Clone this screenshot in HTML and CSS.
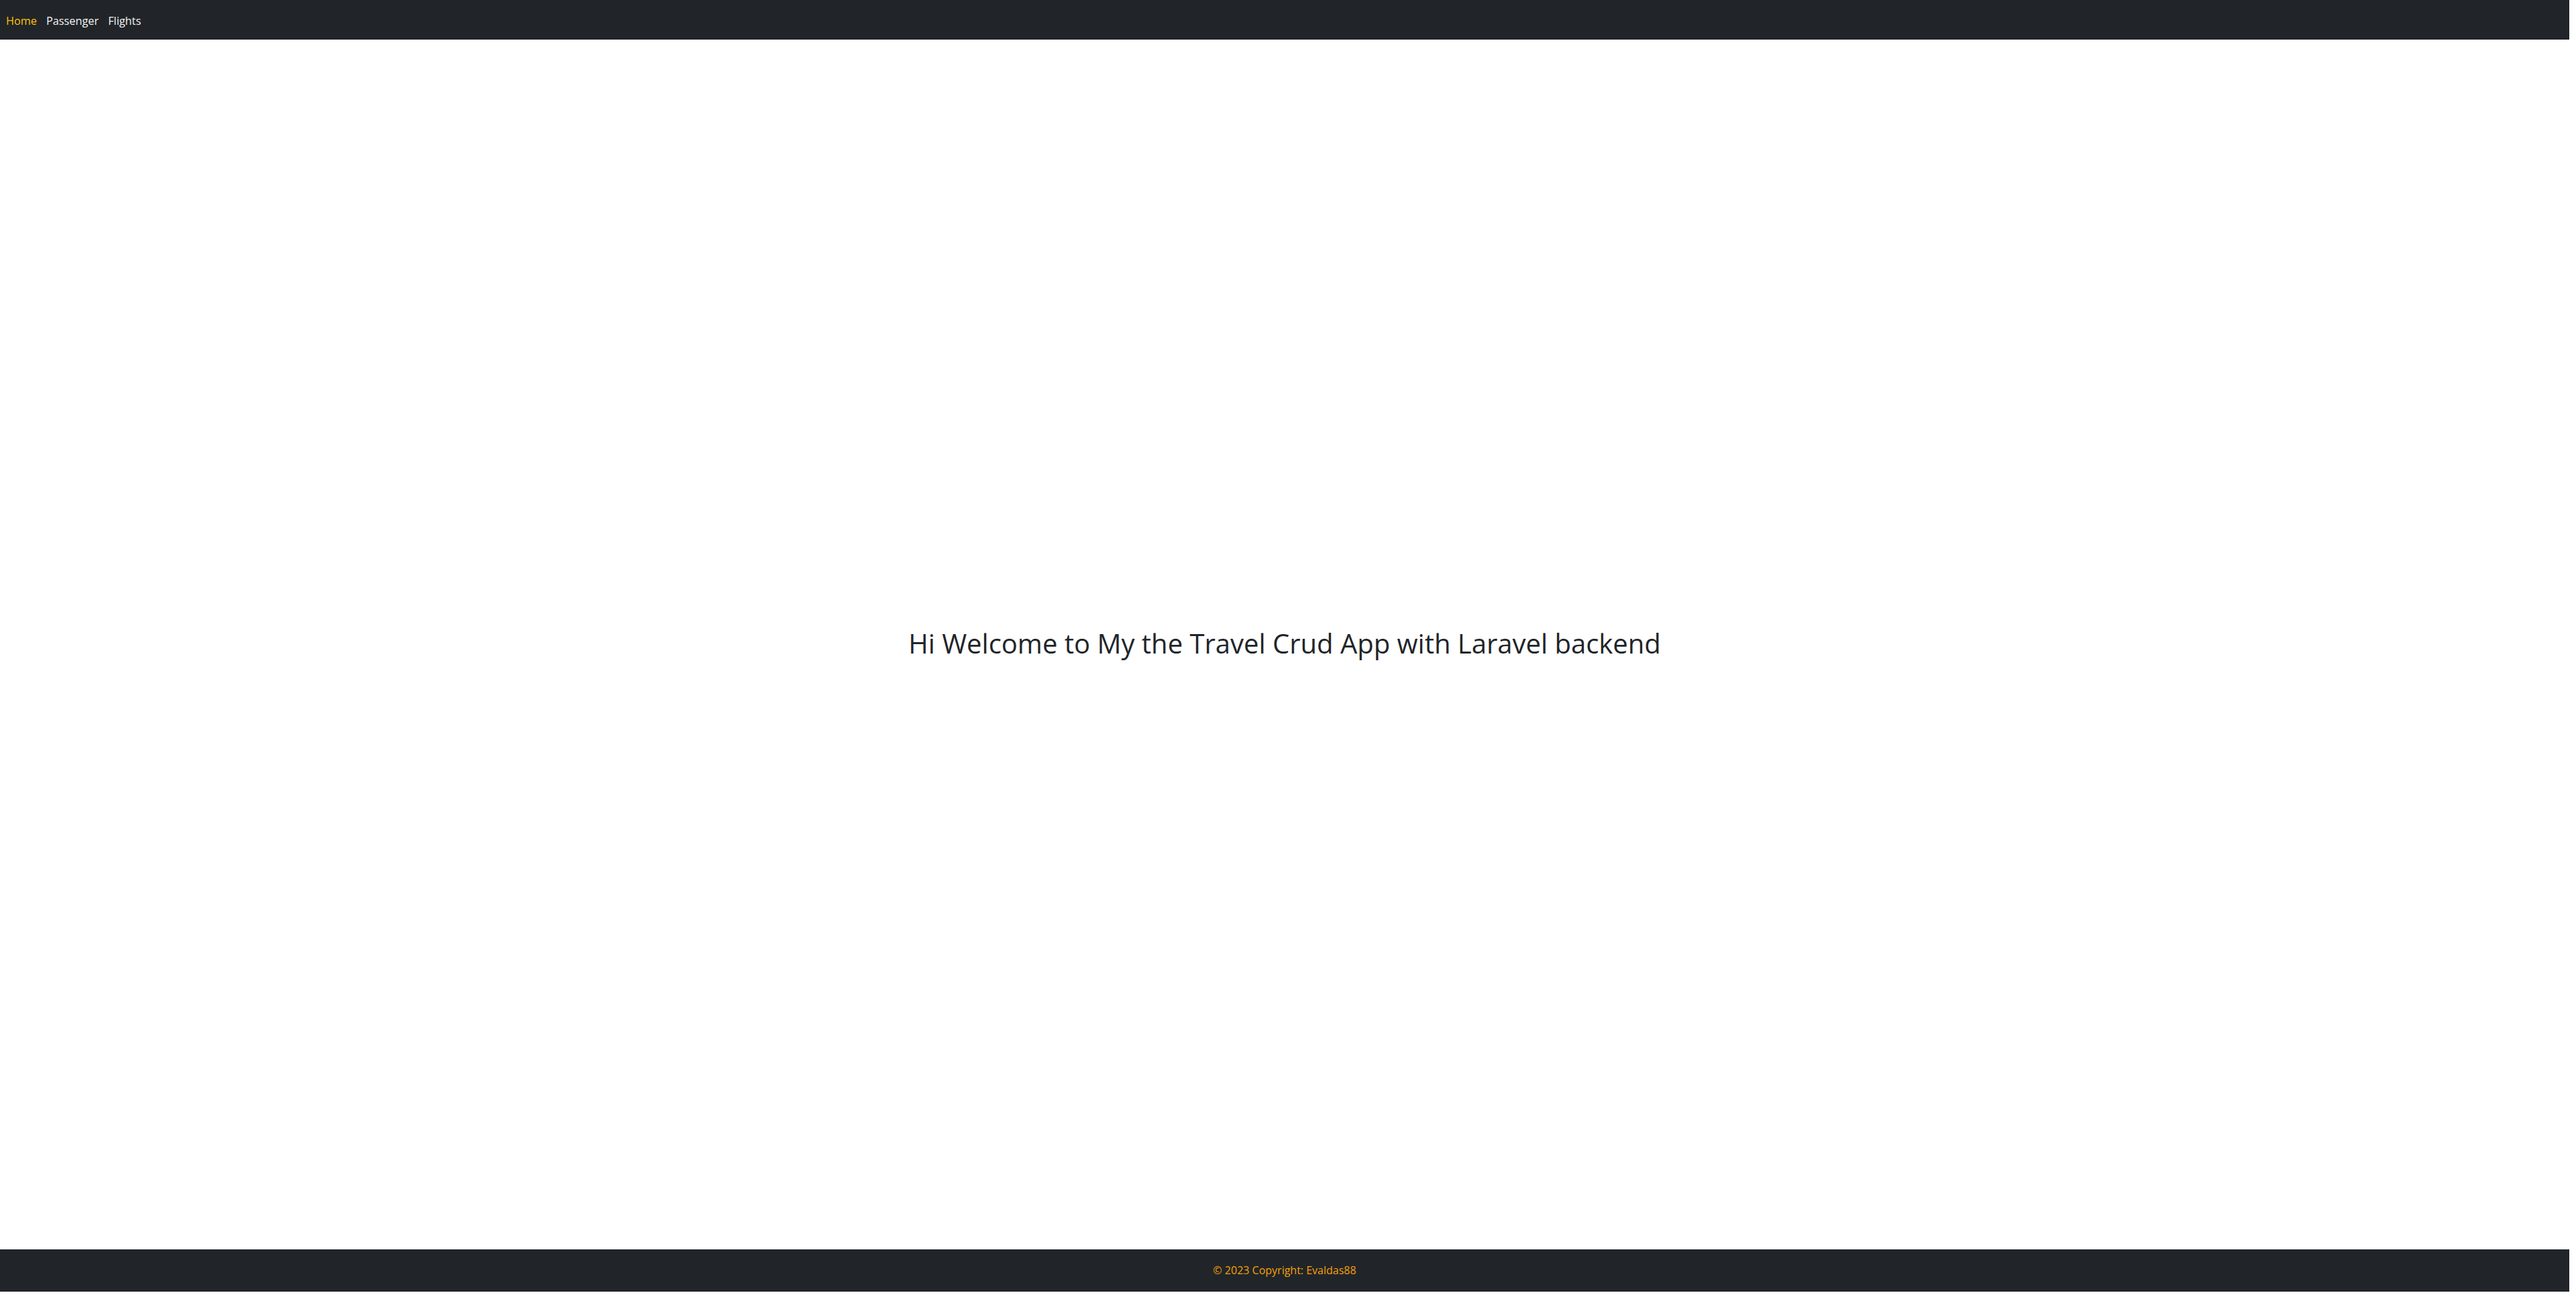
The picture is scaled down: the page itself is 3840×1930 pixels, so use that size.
FILE: index.html
```html
<!DOCTYPE html>
<html lang="en">
<head>
<meta charset="utf-8">
<title>Travel Crud App</title>
<link rel="stylesheet" href="styles.css">
</head>
<body>
<div class="page">
  <nav class="navbar">
    <a class="nav-link active" href="#">Home</a>
    <a class="nav-link" href="#">Passenger</a>
    <a class="nav-link" href="#">Flights</a>
  </nav>
  <main class="content">
    <h1 class="welcome">Hi Welcome to My the Travel Crud App with Laravel backend</h1>
  </main>
  <footer class="footer">
    <span class="copy">© 2023 Copyright: Evaldas88</span>
  </footer>
</div>
</body>
</html>
```
FILE: styles.css
```css
html, body {
  margin: 0;
  padding: 0;
  background: #ffffff;
}
body {
  font-family: "Open Sans", "Noto Sans", sans-serif;
  font-size: 16px;
  color: #212529;
}
.page {
  width: 3830px;
  height: 1925px;
  display: flex;
  flex-direction: column;
}
.navbar {
  height: 59px;
  background: #212529;
  display: flex;
  align-items: center;
  padding-left: 9px;
  gap: 14px;
  flex-shrink: 0;
}
.nav-link {
  color: #f4f4f5;
  text-decoration: none;
  font-size: 16.3px;
  line-height: 24px;
  padding-top: 2px;
}
.nav-link.active {
  color: #ffc107;
}
.content {
  flex: 1;
  display: flex;
  align-items: center;
  justify-content: center;
}
.welcome {
  margin: 0;
  font-size: 40px;
  font-weight: 400;
  line-height: 1.2;
  color: #212529;
  padding-bottom: 3px;
}
.footer {
  height: 63px;
  background: #212529;
  display: flex;
  align-items: center;
  justify-content: center;
  flex-shrink: 0;
}
.copy {
  color: #f7a008;
  font-size: 16px;
  line-height: 24px;
  padding-bottom: 1px;
}
```
